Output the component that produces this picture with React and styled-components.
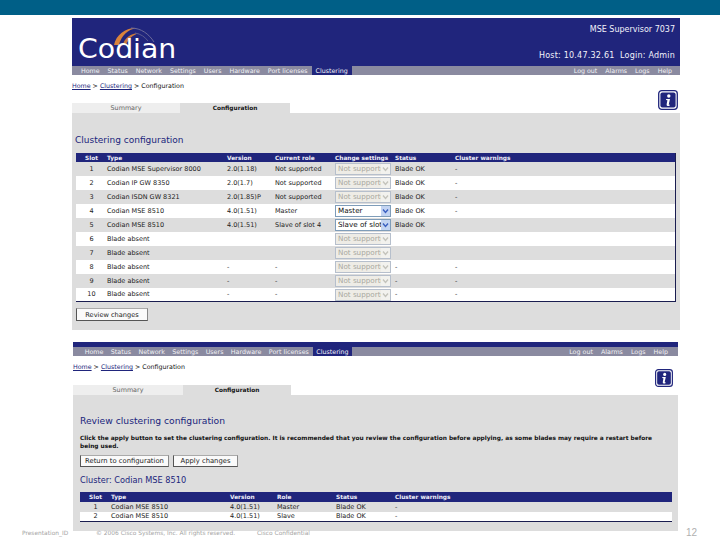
import React from "react";
import styled, { createGlobalStyle } from "styled-components";

const Global = createGlobalStyle`
  html, body { margin: 0; padding: 0; background: #fff; }
  body { font-family: "DejaVu Sans", sans-serif; font-size: 6px; color: #111; width: 720px; height: 540px; overflow: hidden; }
`;
const NAVY = "#20257c";
const Page = styled.div`width:720px;height:540px;display:flex;flex-direction:column;position:relative;overflow:hidden;`;
const TopBar = styled.div`height:15px;background:#005f87;flex:none;`;
const Screen = styled.section`
  flex:none;width:${p=>p.$w}px;margin-left:${p=>p.$x}px;margin-top:${p=>p.$mt}px;display:flex;flex-direction:column;
`;
const Banner = styled.header`height:48px;background:${NAVY};display:flex;justify-content:space-between;position:relative;`;
const Strip = styled.div`height:5px;background:${NAVY};`;
const LogoWrap = styled.div`position:relative;width:110px;padding:21px 0 0 6px;`;
const LogoText = styled.div`font-family:"DejaVu Sans",sans-serif;font-weight:400;font-size:26px;line-height:20px;color:#fff;transform:scaleX(1.09);transform-origin:left center;`;
const LogoArcs = styled.svg`position:absolute;left:41px;top:7px;`;
const BannerInfo = styled.div`display:flex;flex-direction:column;justify-content:space-between;align-items:flex-end;padding:7px 5px 6px 0;color:#f2f2fa;font-size:8px;`;
const HostLine = styled.span`letter-spacing:.22px;`;
const Nav = styled.nav`height:9px;background:#8a8aa0;display:flex;justify-content:space-between;font-size:${p=>p.$fs}px;line-height:9px;color:#f2f2f5;padding-left:${p=>p.$pad}px;padding-right:${p=>p.$pr}px;`;
const NavGroup = styled.div`display:flex;`;
const NavItem = styled.span`padding:0 ${p=>p.$px}px;background:${p=>p.$on?NAVY:"transparent"};`;
const Crumbs = styled.div`height:${p=>p.$h}px;padding-top:${p=>p.$pt}px;font-size:6.3px;line-height:8px;display:flex;justify-content:space-between;box-sizing:border-box;color:#111;font-weight:500;`;
const CrumbLink = styled.a`color:${NAVY};text-decoration:underline;`;
const Info = styled.svg`flex:none;margin-right:${p=>p.$mr}px;margin-top:${p=>p.$mt}px;`;
const Tabs = styled.div`display:flex;height:10px;`;
const Tab = styled.div`width:${p=>p.$w}px;background:${p=>p.$on?"#dddddd":"#eeeeee"};color:${p=>p.$on?"#111":"#666"};font-size:${p=>p.$on?5.8:6.4}px;line-height:10px;text-align:center;font-weight:${p=>p.$on?600:400};`;
const Panel = styled.div`background:#dddddd;height:${p=>p.$h}px;box-sizing:border-box;padding:${p=>p.$pt}px 4px 0 ${p=>p.$pl}px;display:flex;flex-direction:column;align-items:flex-start;`;
const Title = styled.h2`margin:0 0 0 ${p=>p.$ml||0}px;font-weight:400;color:${NAVY};font-size:${p=>p.$s}px;line-height:12px;`;
const Grid = styled.table`
  border-collapse:separate;border-spacing:0;table-layout:fixed;width:${p=>p.$w}px;margin-top:${p=>p.$mt}px;box-sizing:border-box;
  border-bottom:1px solid #1a1d50;border-right:${p=>p.$edge?"1px solid #1a1d50":"0"};font-size:6.5px;
`;
const Th = styled.th`background:${NAVY};color:#f0f0fa;font-weight:700;font-size:5.8px;text-align:${p=>p.$c?"center":"left"};height:${p=>p.$h}px;padding:0;white-space:nowrap;overflow:visible;`;
const Row = styled.tr`background:${p=>p.$alt?"#dddddd":"#ffffff"};`;
const Td = styled.td`height:${p=>p.$h}px;padding:0;white-space:nowrap;text-align:${p=>p.$c?"center":"left"};color:#222;line-height:${p=>p.$h}px;`;
const Select = styled.div`
  width:56px;height:12px;box-sizing:border-box;border:1px solid ${p=>p.$off?"#b6bfcc":"#7f9db9"};background:${p=>p.$off?"#eeece6":"#fff"};
  color:${p=>p.$off?"#a8a8a0":"#111"};font-size:7.2px;line-height:10px;padding-left:2px;display:flex;justify-content:space-between;overflow:hidden;white-space:nowrap;
`;
const SelectText = styled.span`overflow:hidden;flex:1;`;
const Arrow = styled.span`flex:none;width:9px;height:10px;background:${p=>p.$off?"#f2f2ee":"#c3d4f2"};display:flex;align-items:center;justify-content:center;`;
const Btn = styled.button`
  appearance:none;background:#fafafa;border:1px solid #555;border-top-color:#aaa;border-right-color:#888;border-radius:0;padding:0;font-family:inherit;
  width:${p=>p.$w}px;height:${p=>p.$h}px;font-size:${p=>p.$s}px;color:#222;text-align:center;
`;
const BtnRow = styled.div`display:flex;gap:4px;margin-top:${p=>p.$mt}px;`;
const Lead = styled.p`margin:7px 0 0;width:580px;font-weight:700;font-size:5.85px;line-height:8px;color:#111;`;
const Sub = styled.h3`margin:8px 0 0;font-weight:400;color:${NAVY};font-size:8.2px;line-height:10px;`;
const Footer = styled.footer`position:absolute;left:0;right:0;top:529px;height:9px;color:#a4a4a4;font-size:5.9px;line-height:9px;display:flex;`;
const FootA = styled.span`margin-left:${p=>p.$x}px;width:${p=>p.$w}px;white-space:nowrap;`;
const PageNum = styled.span`position:absolute;left:686px;top:-1px;font-size:10px;font-family:"Liberation Sans",sans-serif;color:#b0b0b0;`;

const Chev = ({off}) => <svg width="7" height="6" viewBox="0 0 7 6"><path d="M1 1.5 L3.5 4.5 L6 1.5" fill="none" stroke={off?"#c4c4bc":"#3a5fc0"} strokeWidth="1.4"/></svg>;
const Sel = ({v,off}) => <Select $off={off}><SelectText>{v}</SelectText><Arrow $off={off}><Chev off={off}/></Arrow></Select>;
const InfoIcon = ({s,mr,mt}) => (
  <Info $mr={mr} $mt={mt} width={s} height={s} viewBox="0 0 20 20">
    <rect x=".7" y=".7" width="18.6" height="18.6" rx="3" fill="#fff" stroke={NAVY} strokeWidth="1.3"/>
    <rect x="2.4" y="2.4" width="15.2" height="15.2" rx="2" fill={NAVY}/>
    <circle cx="10.8" cy="6" r="1.7" fill="#fff"/>
    <path d="M8.2 9 H12 L10.8 14.2 Q10.6 15 11.8 14.6 L11.6 15.8 Q8.4 16.8 8.6 14.6 L9.4 10.2 L8 10 Z" fill="#fff"/>
  </Info>
);

const rows = [
  ["1","Codian MSE Supervisor 8000","2.0(1.18)","Not supported","Not supported",true,"Blade OK","-"],
  ["2","Codian IP GW 8350","2.0(1.7)","Not supported","Not supported",true,"Blade OK","-"],
  ["3","Codian ISDN GW 8321","2.0(1.85)P","Not supported","Not supported",true,"Blade OK","-"],
  ["4","Codian MSE 8510","4.0(1.51)","Master","Master",false,"Blade OK","-"],
  ["5","Codian MSE 8510","4.0(1.51)","Slave of slot 4","Slave of slot 4",false,"Blade OK",""],
  ["6","Blade absent","","","Not supported",true,"",""],
  ["7","Blade absent","","","Not supported",true,"",""],
  ["8","Blade absent","-","-","Not supported",true,"-","-"],
  ["9","Blade absent","-","-","Not supported",true,"-","-"],
  ["10","Blade absent","-","-","Not supported",true,"-","-"],
];
const navItems = ["Home","Status","Network","Settings","Users","Hardware","Port licenses","Clustering"];

const NavBar = ({pad,pr,px,fs}) => (
  <Nav $pad={pad} $pr={pr} $fs={fs}>
    <NavGroup>
      {navItems.map(t => <NavItem key={t} $px={px} $on={t==="Clustering"}>{t}</NavItem>)}
    </NavGroup>
    <NavGroup>
      {["Log out","Alarms","Logs","Help"].map(t => <NavItem key={t} $px={4}>{t}</NavItem>)}
    </NavGroup>
  </Nav>
);
const Crumb = () => <span><CrumbLink>Home</CrumbLink> &gt; <CrumbLink>Clustering</CrumbLink> &gt; Configuration</span>;

export default function App() {
  return (
    <Page>
      <Global />
      <TopBar />
      <Screen $x={72} $w={608} $mt={3}>
        <Banner>
          <LogoWrap>
            <LogoArcs width="44" height="22" viewBox="0 0 44 22">
              <path d="M1 20 C3 9 14 2 24 3 C15 4 8 11 6 20 Z" fill="#d9833c"/>
              <path d="M10 20 C11 13 18 8 26 8 C20 10 15 14 13 20 Z" fill="#c87a3e"/>
              <path d="M18 3 C28 3 36 9 41 17" fill="none" stroke="#6b6a9a" strokeWidth="1"/>
              <path d="M22 8 C28 9 32 12 35 16" fill="none" stroke="#5a5a90" strokeWidth="1"/>
            </LogoArcs>
            <LogoText>Codian</LogoText>
          </LogoWrap>
          <BannerInfo>
            <span>MSE Supervisor 7037</span>
            <HostLine>Host: 10.47.32.61 &nbsp;Login: Admin</HostLine>
          </BannerInfo>
        </Banner>
        <NavBar pad={5} pr={4} px={4} fs={6.3} />
        <Crumbs $h={28} $pt={7}>
          <Crumb />
          <InfoIcon s={20} mr={2} mt={8} />
        </Crumbs>
        <Tabs>
          <Tab $w={108}>Summary</Tab>
          <Tab $w={110} $on>Configuration</Tab>
        </Tabs>
        <Panel $h={217} $pt={21} $pl={4}>
          <Title $s={9} $ml={-1}>Clustering configuration</Title>
          <Grid $w={600} $mt={7} $edge>
            <colgroup>
              <col style={{width:31}}/><col style={{width:120}}/><col style={{width:48}}/><col style={{width:60}}/>
              <col style={{width:60}}/><col style={{width:60}}/><col />
            </colgroup>
            <thead>
              <tr>
                <Th $h={9} $c>Slot</Th><Th $h={9}>Type</Th><Th $h={9}>Version</Th><Th $h={9}>Current role</Th>
                <Th $h={9}>Change settings</Th><Th $h={9}>Status</Th><Th $h={9}>Cluster warnings</Th>
              </tr>
            </thead>
            <tbody>
              {rows.map((r,i) => {
                const h = i === 9 ? 13 : 14;
                return (
                  <Row key={r[0]} $alt={i%2===0}>
                    <Td $h={h} $c>{r[0]}</Td><Td $h={h}>{r[1]}</Td><Td $h={h}>{r[2]}</Td><Td $h={h}>{r[3]}</Td>
                    <Td $h={h}><Sel v={r[4]} off={r[5]}/></Td><Td $h={h}>{r[6]}</Td><Td $h={h}>{r[7]}</Td>
                  </Row>
                );
              })}
            </tbody>
          </Grid>
          <BtnRow $mt={6}><Btn $w={72} $h={13} $s={6.6}>Review changes</Btn></BtnRow>
        </Panel>
      </Screen>
      <Screen $x={73} $w={605} $mt={12}>
        <Strip />
        <NavBar pad={8} pr={6} px={3.7} fs={6.35} />
        <Crumbs $h={29} $pt={7}>
          <Crumb />
          <InfoIcon s={18} mr={5} mt={6} />
        </Crumbs>
        <Tabs>
          <Tab $w={110}>Summary</Tab>
          <Tab $w={108} $on>Configuration</Tab>
        </Tabs>
        <Panel $h={136} $pt={20} $pl={7}>
          <Title $s={9.2}>Review clustering configuration</Title>
          <Lead>Click the apply button to set the clustering configuration. It is recommended that you review the configuration before applying, as some blades may require a restart before being used.</Lead>
          <BtnRow $mt={5}>
            <Btn $w={89} $h={12} $s={6.8}>Return to configuration</Btn>
            <Btn $w={65} $h={12} $s={6.8}>Apply changes</Btn>
          </BtnRow>
          <Sub>Cluster: Codian MSE 8510</Sub>
          <Grid $w={592} $mt={7}>
            <colgroup>
              <col style={{width:31}}/><col style={{width:119}}/><col style={{width:47}}/><col style={{width:59}}/>
              <col style={{width:59}}/><col />
            </colgroup>
            <thead>
              <tr>
                <Th $h={10} $c>Slot</Th><Th $h={10}>Type</Th><Th $h={10}>Version</Th><Th $h={10}>Role</Th><Th $h={10}>Status</Th><Th $h={10}>Cluster warnings</Th>
              </tr>
            </thead>
            <tbody>
              <Row $alt><Td $h={10} $c>1</Td><Td $h={10}>Codian MSE 8510</Td><Td $h={10}>4.0(1.51)</Td><Td $h={10}>Master</Td><Td $h={10}>Blade OK</Td><Td $h={10}>-</Td></Row>
              <Row><Td $h={9} $c>2</Td><Td $h={9}>Codian MSE 8510</Td><Td $h={9}>4.0(1.51)</Td><Td $h={9}>Slave</Td><Td $h={9}>Blade OK</Td><Td $h={9}>-</Td></Row>
            </tbody>
          </Grid>
        </Panel>
      </Screen>
      <Footer>
        <FootA $x={22} $w={74}>Presentation_ID</FootA>
        <FootA $x={0} $w={161}>© 2006 Cisco Systems, Inc. All rights reserved.</FootA>
        <FootA $x={0} $w={80}>Cisco Confidential</FootA>
        <PageNum>12</PageNum>
      </Footer>
    </Page>
  );
}
